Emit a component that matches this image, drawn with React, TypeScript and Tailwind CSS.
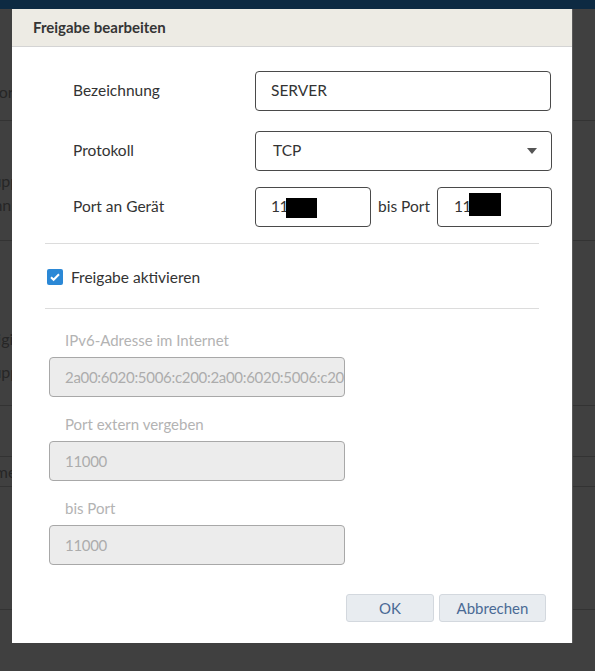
import React from 'react';

const FONT = "font-['Lato','Liberation_Sans',sans-serif]";

// rows of the port list that sits behind the modal
const bgRows = [
  { h: 'h-[112px]', lines: [{ text: 'Favor', top: 'pt-[73px]' }] },
  { h: 'h-[120px]', lines: [{ text: 'Gruppe', top: 'pt-[50px]' }, { text: 'Kennn', top: 'pt-[4px]' }] },
  { h: 'h-[165px]', lines: [{ text: 'Freigie', top: 'pt-[88px]' }, { text: 'Gruppe', top: 'pt-[13px]' }] },
  { h: 'h-[51px]', lines: [] },
  { h: 'h-[30px]', lines: [{ text: 'Anmeldung', top: 'pt-[5px]' }] },
  { h: 'h-[123px]', lines: [] },
];

const Backdrop: React.FC = () => (
  <div className="flex flex-col">
    <div className="h-[9px] bg-[#0d2a42]" />
    {bgRows.map((row, i) => (
      <div key={i} className={`${row.h} border-b border-[#333333] flex flex-col`}>
        {row.lines.map((l, j) => (
          <div key={j} className={`${l.top} -ml-[25px] text-[16px] leading-[20px] text-[#262626] whitespace-nowrap`}>
            {l.text}
          </div>
        ))}
      </div>
    ))}
  </div>
);

const TextField: React.FC<{ children: React.ReactNode; className?: string }> = ({ children, className = '' }) => (
  <div className={`shrink-0 h-[40px] rounded-[4px] border border-[#4a4a4a] bg-white flex items-center px-[15px] text-[15.5px] text-[#333333] ${className}`}>
    {children}
  </div>
);

const Redacted: React.FC<{ w: string; h: string; off?: string }> = ({ w, h, off = '' }) => (
  <span className={`inline-block bg-black ${w} ${h} ${off}`} />
);

const DisabledField: React.FC<{ label: string; value: string; labelGap: string }> = ({ label, value, labelGap }) => (
  <div className={`flex flex-col ${labelGap}`}>
    <div className="pl-[16px] text-[15px] leading-[20px] text-[#b3b3b3]">{label}</div>
    <div className="mt-[7px] w-[296px] h-[40px] rounded-[4px] border border-[#a8a8a8] bg-[#ececec] flex items-center pl-[15px] overflow-hidden whitespace-nowrap text-[15px] tracking-[-0.3px] text-[#acacac]">
      {value}
    </div>
  </div>
);

const App: React.FC = () => {
  return (
    <div className={`relative w-[595px] h-[671px] overflow-hidden bg-[#404040] ${FONT}`}>
      <Backdrop />

      {/* Edit dialog */}
      <div className="absolute left-[12px] top-[9px] w-[560px] h-[634px] bg-white flex flex-col shadow-[1px_0_0_#5a5a5a]">
        <div className="h-[38px] bg-[#edebe4] border-b border-[#d4d4d4] flex items-center pl-[21px]">
          <span className="text-[15px] font-bold text-[#353535]">Freigabe bearbeiten</span>
        </div>

        <div className="flex flex-col pl-[33px] w-[527px]">
          <div className="mt-[24px] flex items-center">
            <div className="w-[210px] shrink-0 pl-[28px] text-[15.5px] text-[#333333]">Bezeichnung</div>
            <TextField className="w-[296px]">SERVER</TextField>
          </div>

          <div className="mt-[20px] flex items-center">
            <div className="w-[210px] shrink-0 pl-[28px] text-[15.5px] text-[#333333]">Protokoll</div>
            <TextField className="w-[297px] justify-between pl-[17px] pr-[14px]">
              <span>TCP</span>
              <svg width="10" height="6" viewBox="0 0 10 6">
                <path d="M0 0h10L5 6z" fill="#555555" />
              </svg>
            </TextField>
          </div>

          <div className="mt-[16px] flex items-center">
            <div className="w-[210px] shrink-0 pl-[28px] text-[15.5px] text-[#333333]">Port an Gerät</div>
            <TextField className="w-[116px]">
              <span className="tracking-[-0.5px]">11</span>
              <Redacted w="w-[31px]" h="h-[20px]" off="mt-[2px] -ml-[2px]" />
            </TextField>
            <span className="shrink-0 w-[66px] text-center whitespace-nowrap text-[15.5px] text-[#333333]">bis Port</span>
            <TextField className="w-[115px] pl-[16px]">
              <span className="tracking-[-0.5px]">11</span>
              <Redacted w="w-[32px]" h="h-[23px]" off="-mt-[5px] -ml-[2px]" />
            </TextField>
          </div>

          <div className="mt-[16px] h-px w-[494px] bg-[#dcdcdc]" />

          <label className="mt-[21px] flex items-center gap-[8px] pl-[2px]">
            <span className="w-[16px] h-[16px] rounded-[2px] bg-[#2b88d6] flex items-center justify-center">
              <svg width="12" height="12" viewBox="0 0 12 12">
                <path d="M2 6.2l2.6 2.6L10 3.2" fill="none" stroke="white" strokeWidth="2" />
              </svg>
            </span>
            <span className="text-[15.5px] leading-[24px] text-[#333333]">Freigabe aktivieren</span>
          </label>

          <div className="mt-[19px] h-px w-[494px] bg-[#dcdcdc]" />
        </div>

        <div className="flex flex-col pl-[37px]">
          <DisabledField
            labelGap="mt-[21px]"
            label="IPv6-Adresse im Internet"
            value="2a00:6020:5006:c200:2a00:6020:5006:c200"
          />
          <DisabledField labelGap="mt-[17px]" label="Port extern vergeben" value="11000" />
          <DisabledField labelGap="mt-[17px]" label="bis Port" value="11000" />
        </div>

        <div className="mt-[29px] flex justify-end gap-[5px] pr-[26px]">
          <button className="w-[88px] h-[28px] rounded-[3px] bg-[#e8ecf0] border border-[#d3d8de] text-[15px] text-[#4a6a95]">
            OK
          </button>
          <button className="w-[107px] h-[28px] rounded-[3px] bg-[#e8ecf0] border border-[#d3d8de] text-[15px] text-[#4a6a95]">
            Abbrechen
          </button>
        </div>
      </div>
    </div>
  );
};

export default App;
